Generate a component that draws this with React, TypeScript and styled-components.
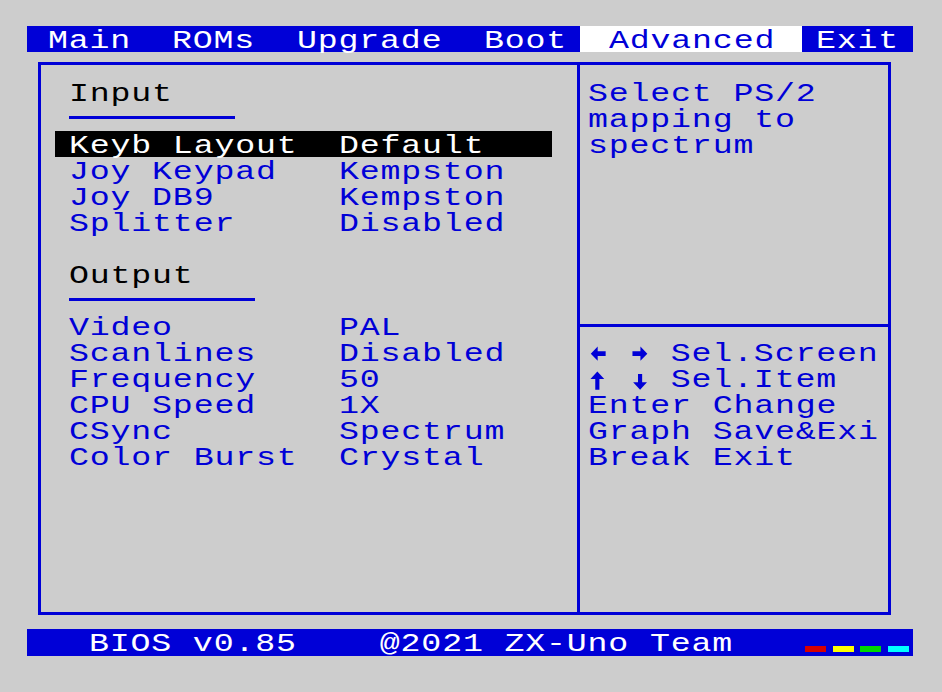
import React from "react";
import styled, { createGlobalStyle } from "styled-components";

const CH = 20.77;
const BLUE = "#0000d7";
const GRAY = "#cdcdcd";
const FONT_SIZE = 25;
const STRETCH = 1.33;

const Global = createGlobalStyle`
  html, body { margin: 0; padding: 0; background: ${GRAY}; }
  body { font-family: "Liberation Mono", "DejaVu Sans Mono", monospace; }
`;

const Screen = styled.div`
  width: 942px;
  height: 692px;
  box-sizing: border-box;
  padding: 26px 0 0 27px;
  background: ${GRAY};
  display: flex;
  flex-direction: column;
  font-family: "Liberation Mono", "DejaVu Sans Mono", monospace;
  font-size: ${FONT_SIZE}px;
  white-space: pre;
  overflow: hidden;
`;

/* ZX-style wide glyphs: each character occupies one 20.77px cell */
const Txt = styled.span`
  display: inline-block;
  transform: scaleX(${STRETCH});
  transform-origin: 0 50%;
  letter-spacing: ${CH / STRETCH - FONT_SIZE * 0.6}px;
`;

const TextCell = styled.div`
  height: 26px;
  box-sizing: border-box;
  padding-top: 5px;
  line-height: 21px;
`;

/* ---------- top menu ---------- */
const MenuBar = styled.div`
  width: 886px;
  height: 26px;
  display: flex;
  background: ${BLUE};
`;

const Tab = styled(TextCell)<{ $pl: number; $w: number; $active?: boolean }>`
  flex: none;
  width: ${(p) => p.$w}px;
  padding-left: ${(p) => p.$pl}px;
  background: ${(p) => (p.$active ? "#ffffff" : "transparent")};
  color: ${(p) => (p.$active ? BLUE : "#ffffff")};
`;

/* ---------- main panel ---------- */
const Panel = styled.div`
  margin: 10px 0 0 11px;
  width: 853px;
  height: 553px;
  box-sizing: border-box;
  border: 3px solid ${BLUE};
  display: grid;
  grid-template-columns: 539px 1fr;
`;

const LeftPane = styled.div`
  border-right: 3px solid ${BLUE};
  padding-top: 14px;
  display: flex;
  flex-direction: column;
`;

const RightPane = styled.div`
  display: grid;
  grid-template-rows: 262px 1fr;
`;

const InfoBox = styled.div`
  border-bottom: 3px solid ${BLUE};
  padding: 14px 0 0 7.8px;
  color: ${BLUE};
`;

const HelpBox = styled.div`
  padding: 12px 0 0 7.8px;
  color: ${BLUE};
`;

const Heading = styled(TextCell)<{ $gap?: boolean }>`
  margin-left: 27.5px;
  margin-top: ${(p) => (p.$gap ? 26 : 0)}px;
  color: #000000;
`;

const Rule = styled.div<{ $chars: number }>`
  margin: 11px 0 12px 27.5px;
  width: ${(p) => p.$chars * CH}px;
  height: 3px;
  background: ${BLUE};
`;

const OptionRow = styled(TextCell)<{ $selected?: boolean }>`
  margin-left: 14px;
  width: 497px;
  padding-left: 13.5px;
  display: flex;
  background: ${(p) => (p.$selected ? "#000000" : "transparent")};
  color: ${(p) => (p.$selected ? "#ffffff" : BLUE)};
`;

const OptionLabel = styled.span`
  width: ${13 * CH}px;
  flex: none;
`;

const HelpLine = styled(TextCell)`
  display: flex;
`;

const CharCell = styled.span`
  display: inline-block;
  width: ${CH}px;
  height: 26px;
  margin-top: -5px;
  flex: none;
`;

/* ---------- status bar ---------- */
const StatusBar = styled.div`
  margin-top: 14px;
  width: 886px;
  height: 27px;
  display: flex;
  background: ${BLUE};
  color: #ffffff;
`;

const StatusText = styled(TextCell)`
  padding-left: ${3 * CH}px;
`;

const Stripes = styled.div`
  margin-left: auto;
  padding: 17px 4px 0 0;
  display: flex;
  gap: 6.7px;
`;

const Stripe = styled.div<{ $color: string }>`
  width: 21px;
  height: 6px;
  background: ${(p) => p.$color};
`;

type Dir = "left" | "right" | "up" | "down";
const ARROWS: Record<Dir, string> = {
  left: "M0.8 4.5 L2.8 2.3 L2.8 3.8 L5.1 3.8 L5.1 5.2 L2.8 5.2 L2.8 6.7 Z",
  right: "M5.3 4.5 L3.3 2.3 L3.3 3.8 L1 3.8 L1 5.2 L3.3 5.2 L3.3 6.7 Z",
  up: "M2.7 2.0 L4.7 4.3 L3.3 4.3 L3.3 7.6 L2.1 7.6 L2.1 4.3 L0.7 4.3 Z",
  down: "M3.2 7.6 L5.2 5.3 L3.8 5.3 L3.8 2.8 L2.6 2.8 L2.6 5.3 L1.2 5.3 Z",
};

const Arrow = ({ dir }: { dir: Dir }) => (
  <CharCell>
    <svg width={CH} height={26} viewBox="0 0 6 8" preserveAspectRatio="none">
      <path d={ARROWS[dir]} fill={BLUE} />
    </svg>
  </CharCell>
);

const tabs = [
  { label: "Main", pl: CH, pr: 0 },
  { label: "ROMs", pl: 2 * CH, pr: 0 },
  { label: "Upgrade", pl: 2 * CH, pr: 0 },
  { label: "Boot", pl: 2 * CH, pr: 12.98 },
  { label: "Advanced", pl: 28.6, pr: 27.24, active: true },
  { label: "Exit", pl: 14.3, pr: 0 },
];

const inputOptions = [
  ["Keyb Layout", "Default"],
  ["Joy Keypad", "Kempston"],
  ["Joy DB9", "Kempston"],
  ["Splitter", "Disabled"],
];

const outputOptions = [
  ["Video", "PAL"],
  ["Scanlines", "Disabled"],
  ["Frequency", "50"],
  ["CPU Speed", "1X"],
  ["CSync", "Spectrum"],
  ["Color Burst", "Crystal"],
];

export default function App() {
  return (
    <>
      <Global />
      <Screen>
        <MenuBar>
          {tabs.map((t) => (
            <Tab
              key={t.label}
              $pl={t.pl}
              $w={t.pl + t.label.length * CH + t.pr}
              $active={t.active}
            >
              <Txt>{t.label}</Txt>
            </Tab>
          ))}
        </MenuBar>

        <Panel>
          <LeftPane>
            <Heading>
              <Txt>Input</Txt>
            </Heading>
            <Rule $chars={8} />
            {inputOptions.map(([k, v], i) => (
              <OptionRow key={k} $selected={i === 0}>
                <OptionLabel>
                  <Txt>{k}</Txt>
                </OptionLabel>
                <Txt>{v}</Txt>
              </OptionRow>
            ))}
            <Heading $gap>
              <Txt>Output</Txt>
            </Heading>
            <Rule $chars={9} />
            {outputOptions.map(([k, v]) => (
              <OptionRow key={k}>
                <OptionLabel>
                  <Txt>{k}</Txt>
                </OptionLabel>
                <Txt>{v}</Txt>
              </OptionRow>
            ))}
          </LeftPane>

          <RightPane>
            <InfoBox>
              <TextCell>
                <Txt>Select PS/2</Txt>
              </TextCell>
              <TextCell>
                <Txt>mapping to</Txt>
              </TextCell>
              <TextCell>
                <Txt>spectrum</Txt>
              </TextCell>
            </InfoBox>
            <HelpBox>
              <HelpLine>
                <Arrow dir="left" />
                <CharCell />
                <Arrow dir="right" />
                <Txt> Sel.Screen</Txt>
              </HelpLine>
              <HelpLine>
                <Arrow dir="up" />
                <CharCell />
                <Arrow dir="down" />
                <Txt> Sel.Item</Txt>
              </HelpLine>
              <HelpLine>
                <Txt>Enter Change</Txt>
              </HelpLine>
              <HelpLine>
                <Txt>Graph Save&amp;Exi</Txt>
              </HelpLine>
              <HelpLine>
                <Txt>Break Exit</Txt>
              </HelpLine>
            </HelpBox>
          </RightPane>
        </Panel>

        <StatusBar>
          <StatusText>
            <Txt>BIOS v0.85    @2021 ZX-Uno Team</Txt>
          </StatusText>
          <Stripes>
            <Stripe $color="#d70000" />
            <Stripe $color="#ffff00" />
            <Stripe $color="#00d700" />
            <Stripe $color="#00ffff" />
          </Stripes>
        </StatusBar>
      </Screen>
    </>
  );
}
